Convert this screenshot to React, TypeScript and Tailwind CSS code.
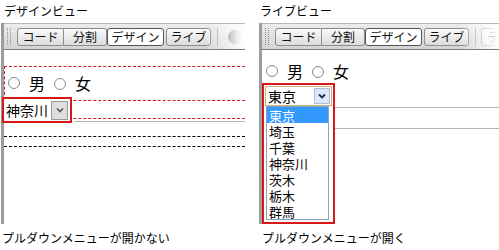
import React from "react";

// ─────────────────────────────────────────────────────────
// Design view vs. live view: the pull-down menu opens only
// in live view.
// ─────────────────────────────────────────────────────────

const jp = { fontFamily: '"Noto Sans CJK JP", "Noto Sans", sans-serif' };

function Radio() {
    return <span className="inline-block h-[12px] w-[12px] rounded-full border border-[#8a8a8a] bg-white" />;
}

function ToolButton({ label, active, className = "" }: { label: string; active?: boolean; className?: string }) {
    return (
        <div
            className={
                "flex h-[18px] shrink-0 items-center justify-center overflow-hidden whitespace-nowrap border text-[12px] leading-none text-[#111] " +
                (active ? "rounded-[3px] border-[#555] bg-white " : "border-[#8c8c8c] bg-linear-to-b from-[#fafafa] to-[#dcdcdc] ") +
                className
            }
        >
            {label}
        </div>
    );
}

function Toolbar({ live }: { live?: boolean }) {
    return (
        <div className="relative flex h-[27px] items-center overflow-hidden border-t border-b border-t-[#b8b8b8] border-b-[#7d7d7d] bg-linear-to-b from-[#ececec] to-[#d4d4d4] pl-[3px]">
            {/* grip */}
            <div className="h-[17px] w-[4px] shrink-0 border-x border-dotted border-[#8a8a8a]" />
            <div className="ml-[6px] flex shrink-0 items-center">
                <ToolButton label="コード" className="w-[47px] rounded-l-[3px]" />
                <ToolButton label="分割" className="w-[43px] rounded-r-[3px] border-l-0" />
                <ToolButton label="デザイン" active className="w-[57px]" />
                <ToolButton label="ライブ" className="ml-[2px] w-[45px] rounded-[3px]" />
                <div className="ml-[6px] h-[18px] w-px shrink-0 bg-[#a0a0a0]" />
                {live ? (
                    <ToolButton label="デザイン" className="ml-[5px] w-[57px] justify-start rounded-[3px] pl-[6px]" />
                ) : (
                    <span className="ml-[10px] inline-block h-[14px] w-[14px] shrink-0 rounded-full bg-linear-to-r from-[#555] to-[#ccc]" />
                )}
            </div>
            {/* right-hand fade of the cropped screenshot */}
            <div className="pointer-events-none absolute inset-y-0 right-0 w-[40px] bg-linear-to-r from-transparent to-white" />
        </div>
    );
}

function RadioRow() {
    return (
        <div className="flex items-center text-[16px] leading-none text-black">
            <Radio />
            <span className="ml-[9px]">男</span>
            <span className="ml-[9px]"><Radio /></span>
            <span className="ml-[9px]">女</span>
        </div>
    );
}

function DesignView() {
    return (
        <div className="w-[257px] shrink-0">
            <div className="h-[23px] pl-[4px] pt-[4px] text-[12px] leading-[14px] text-black">デザインビュー</div>
            <div className="ml-[1px] h-[201px] w-[244px] border-l-[3px] border-[#9c9c9c]">
                <Toolbar />
                <div className="pt-[16px]">
                    <div className="h-[34px] border-t border-l border-dashed border-[#c81e1e] pl-[3px] pt-[8px]">
                        <RadioRow />
                    </div>
                    <div className="relative h-[19px] border-t border-b border-dashed border-[#c81e1e]">
                        {/* highlighted select (annotation) */}
                        <div className="absolute -left-[2px] -top-[4px] flex h-[26px] w-[70px] items-center border-2 border-[#d81818] bg-white pl-[2px]">
                            <span className="text-[14px] leading-none">神奈川</span>
                            <span className="ml-[3px] flex h-[19px] w-[17px] items-center justify-center border border-[#9a9a9a] bg-[#dedede]">
                                <svg width="8" height="6" viewBox="0 0 8 6"><path d="M1 1.5 L4 4.5 L7 1.5" stroke="#555" strokeWidth="1.6" fill="none" /></svg>
                            </span>
                        </div>
                    </div>
                    <div className="ml-[70px] mt-[2px] h-px bg-[#b4b4b4]" />
                    <div className="mt-[14px] border-t border-dashed border-black" />
                    <div className="mt-[9px] border-t border-dashed border-black" />
                </div>
            </div>
            <div className="pl-[2px] pt-[7px] text-[12px] leading-[14px] text-black">プルダウンメニューが開かない</div>
        </div>
    );
}

const prefectures = ["東京", "埼玉", "千葉", "神奈川", "茨木", "栃木", "群馬"];

function LiveView() {
    return (
        <div className="min-w-0 flex-1">
            <div className="h-[23px] pl-[3px] pt-[4px] text-[12px] leading-[14px] text-black">ライブビュー</div>
            <div className="ml-[2px] h-[201px] border-l-[3px] border-[#9c9c9c]">
                <Toolbar live />
                <div className="pl-[4px] pt-[13px]">
                    <RadioRow />
                </div>
                <div className="relative mt-[4px] flex items-start">
                    <div className="w-[73px] shrink-0 border-2 border-[#d81818] bg-white p-px">
                        <div className="flex h-[20px] items-center border border-[#c8b47e] bg-white pl-[2px]">
                            <span className="flex-1 text-[14px] leading-none">東京</span>
                            <span className="mr-px flex h-[16px] w-[16px] items-center justify-center border border-[#a7c1de] bg-[#dce9f7]">
                                <svg width="8" height="6" viewBox="0 0 8 6"><path d="M1 1.5 L4 4.5 L7 1.5" stroke="#1d2a4a" strokeWidth="1.8" fill="none" /></svg>
                            </span>
                        </div>
                        <div className="mb-px ml-px mr-[3px] border border-[#8ea3b8] bg-white">
                            {prefectures.map((p, i) => (
                                <div
                                    key={p}
                                    className={
                                        "flex h-[16px] items-center pl-[2px] text-[13px] leading-none " +
                                        (i === 0 ? "bg-[#3399ff] text-white" : "text-black")
                                    }
                                >
                                    {p}
                                </div>
                            ))}
                        </div>
                    </div>
                    <div className="flex-1 pt-[24px]">
                        <div className="h-px bg-[#b4b4b4]" />
                        <div className="mt-[20px] h-px bg-[#b4b4b4]" />
                    </div>
                </div>
            </div>
            <div className="pl-[5px] pt-[7px] text-[12px] leading-[14px] text-black">プルダウンメニューが開く</div>
        </div>
    );
}

export default function App() {
    return (
        <div className="flex h-[250px] w-[499px] overflow-hidden bg-white" style={jp}>
            <DesignView />
            <LiveView />
        </div>
    );
}
